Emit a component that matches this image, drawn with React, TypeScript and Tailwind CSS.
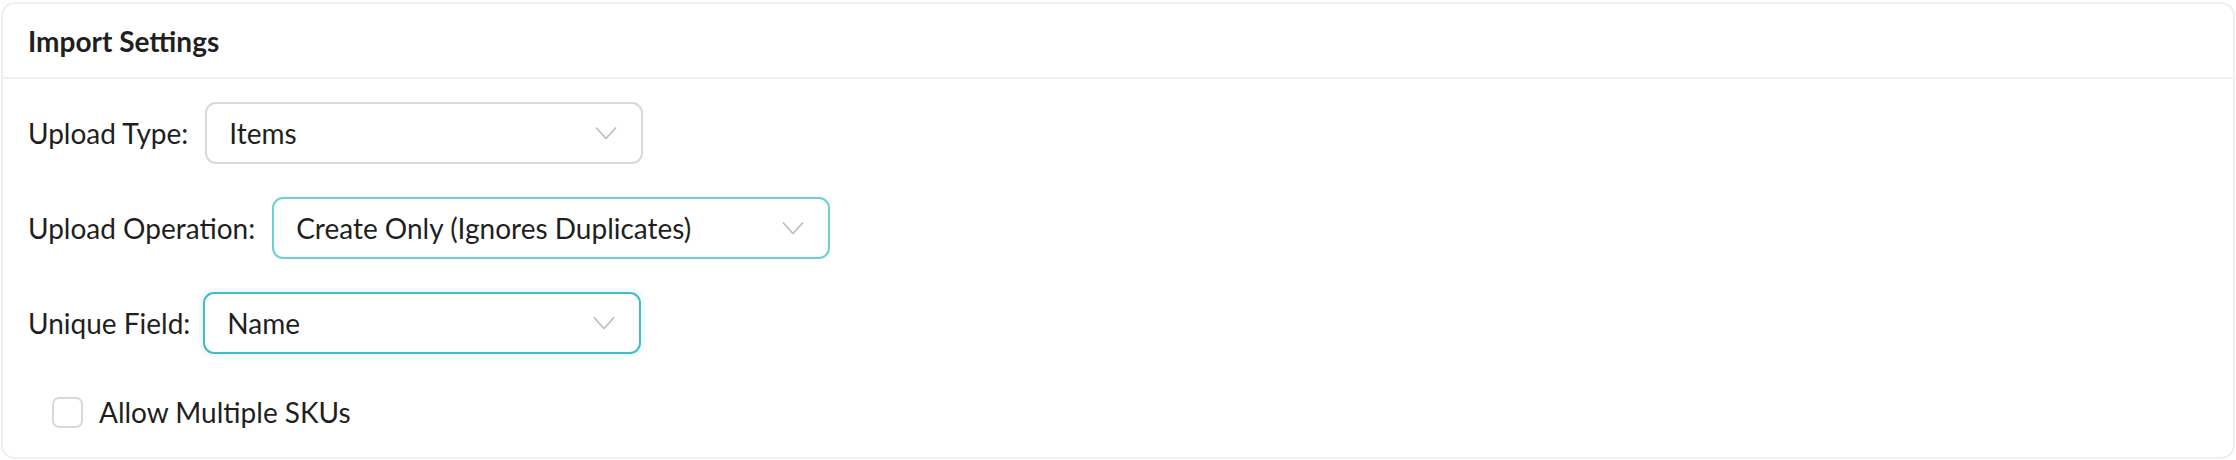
import type { ReactNode } from "react";

interface SelectBoxProps {
  value: string;
  width: string;
  tone: "plain" | "hover" | "focus";
}

function SelectBox({ value, width, tone }: SelectBoxProps) {
  const border =
    tone === "plain"
      ? "border-[#d9d9d9]"
      : tone === "hover"
        ? "border-[#6fd0d1]"
        : "border-[#45bcc3] shadow-[0_0_0_4px_rgba(70,200,210,0.08)]";
  return (
    <div
      className={`${width} h-[62px] flex items-center justify-between rounded-[11px] border-2 bg-white pl-[22px] pr-[24px] ${border}`}
    >
      <span className="text-[28px] text-[#1f1f1f]">{value}</span>
      {/* chevron */}
      <svg width="22" height="14" viewBox="0 0 22 14" fill="none" className="text-[#bfbfbf]">
        <polyline points="1,1.5 11,12.5 21,1.5" stroke="currentColor" strokeWidth="1.8" />
      </svg>
    </div>
  );
}

function FieldRow({ label, children, gap = "gap-[17px]" }: { label: string; children: ReactNode; gap?: string }) {
  return (
    <div className={`flex items-center ${gap}`}>
      <span className="text-[28px] text-[#1f1f1f]">{label}</span>
      {children}
    </div>
  );
}

export default function App() {
  return (
    <div
      className="w-[2236px] h-[460px] bg-white pt-[2px] px-[1px]"
      style={{ fontFamily: "Lato, 'Noto Sans', sans-serif" }}
    >
      <div className="h-[457px] rounded-[14px] border-2 border-[#efefef] bg-white flex flex-col">
        {/* header */}
        <div className="h-[75px] flex items-center px-[25px] border-b-2 border-[#efefef]">
          <h1 className="text-[28px] font-bold text-[#1f1f1f]">Import Settings</h1>
        </div>
        <div className="flex flex-col gap-[33px] pt-[23px] px-[25px]">
          <FieldRow label="Upload Type:">
            <SelectBox value="Items" width="w-[438px]" tone="plain" />
          </FieldRow>
          <FieldRow label="Upload Operation:">
            <SelectBox value="Create Only (Ignores Duplicates)" width="w-[558px]" tone="hover" />
          </FieldRow>
          <FieldRow label="Unique Field:" gap="gap-[13px]">
            <SelectBox value="Name" width="w-[438px]" tone="focus" />
          </FieldRow>
        </div>
        <label className="flex items-center gap-[16px] mt-[37px] ml-[49px]">
          <span className="w-[31px] h-[31px] rounded-[7px] border-2 border-[#d9d9d9] bg-white" />
          <span className="text-[28px] text-[#1f1f1f]">Allow Multiple SKUs</span>
        </label>
      </div>
    </div>
  );
}
